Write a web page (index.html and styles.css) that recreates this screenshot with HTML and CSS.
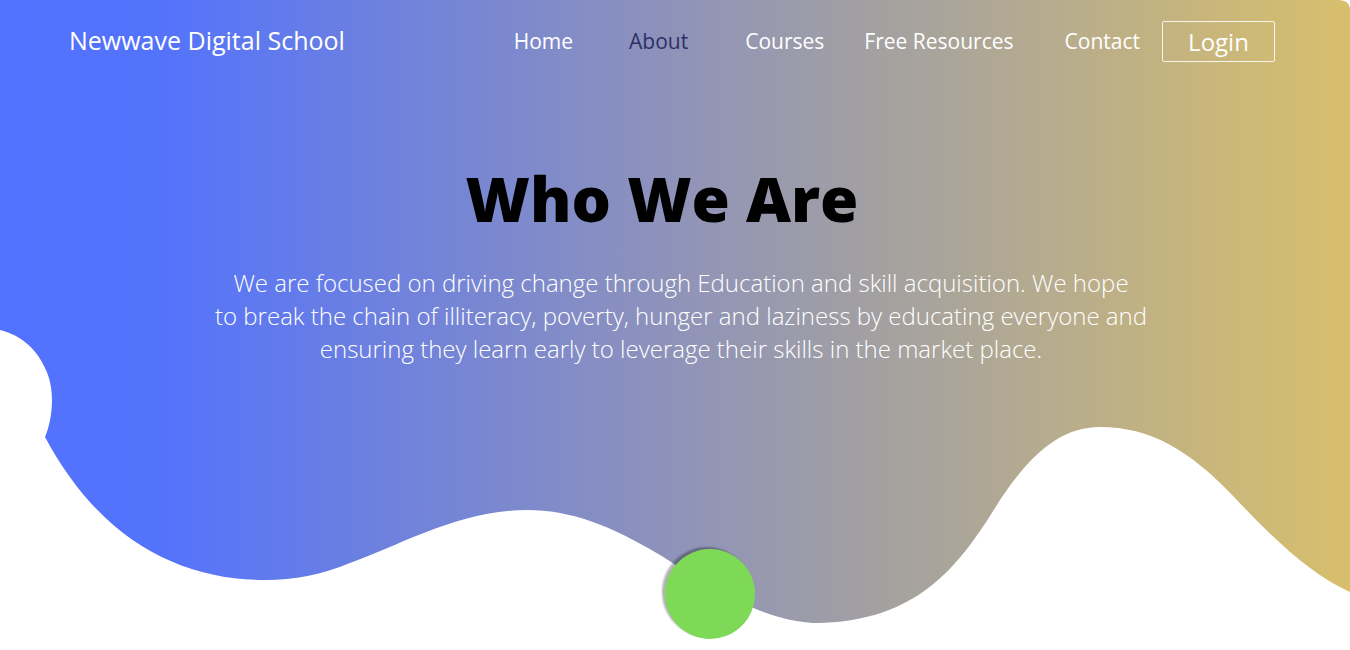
FILE: index.html
```html
<!DOCTYPE html>
<html lang="en">
<head>
<meta charset="utf-8">
<title>Newwave Digital School</title>
<link rel="stylesheet" href="styles.css">
</head>
<body>
<div class="hero">
  <svg class="blob" viewBox="0 0 1350 650" preserveAspectRatio="none" aria-hidden="true">
    <defs>
      <linearGradient id="g" x1="0" y1="0" x2="1350" y2="0" gradientUnits="userSpaceOnUse">
        <stop offset="0" stop-color="#5271ff"/>
        <stop offset="0.12" stop-color="#5473fb"/>
        <stop offset="0.5" stop-color="#8f93b9"/>
        <stop offset="0.68" stop-color="#a7a39d"/>
        <stop offset="1" stop-color="#d8bf6c"/>
      </linearGradient>
    </defs>
    <path fill="url(#g)" d="M0,0 H1338 Q1350,0 1350,10 V592
      C1310,575 1270,535 1235,498
      C1190,450 1150,427 1100,427
      C1060,427 1030,455 1000,500
      C960,565 920,620 820,623
      C760,623 700,580 660,555
      C610,525 570,510 527,510
      C460,510 400,545 350,563
      C320,575 295,580 265,580
      C180,580 100,540 45,437
      C52,420 55,395 48,375
      C38,348 20,335 0,330 Z"/>
  </svg>

  <nav class="nav">
    <a class="brand" href="#">Newwave Digital School</a>
    <ul class="menu">
      <li class="menu-item"><a class="menu-link" href="#">Home</a></li>
      <li class="menu-item menu-item--about"><a class="menu-link menu-link--active" href="#">About</a></li>
      <li class="menu-item menu-item--courses"><a class="menu-link" href="#">Courses</a></li>
      <li class="menu-item menu-item--free"><a class="menu-link" href="#">Free Resources</a></li>
      <li class="menu-item menu-item--contact"><a class="menu-link" href="#">Contact</a></li>
      <li class="menu-item menu-item--login"><a class="login" href="#">Login</a></li>
    </ul>
  </nav>

  <section class="intro">
    <h1 class="title">Who We Are</h1>
    <p class="lead">We are focused on driving change through Education and skill acquisition. We hope<br>to break the chain of illiteracy, poverty, hunger and laziness by educating everyone and ensuring they learn early to leverage their skills in the market place.</p>
  </section>

  <div class="dot"></div>
</div>
</body>
</html>
```
FILE: styles.css
```css
* { box-sizing: border-box; }
html, body { margin: 0; padding: 0; }
body {
  font-family: "Open Sans", "Noto Sans", sans-serif;
  background: #ffffff;
  overflow: hidden;
}
.hero {
  position: relative;
  width: 1350px;
  height: 650px;
  overflow: hidden;
}
.blob {
  position: absolute;
  left: 0;
  top: 0;
  width: 1350px;
  height: 650px;
  z-index: 0;
}
.nav {
  position: relative;
  z-index: 1;
  display: flex;
  align-items: center;
  height: 82px;
  padding: 0 75px 0 69px;
}
.brand {
  color: #ffffff;
  text-decoration: none;
  font-size: 25px;
  font-weight: 400;
  margin-top: -3px;
}
.menu {
  display: flex;
  align-items: center;
  list-style: none;
  margin: 0 0 0 auto;
  padding: 0;
}
.menu-link {
  color: #ffffff;
  text-decoration: none;
  font-size: 21px;
  font-weight: 400;
}
.menu-link--active { color: #2f2f66; }
.menu-item--about { margin-left: 56px; }
.menu-item--courses { margin-left: 57px; }
.menu-item--free { margin-left: 40px; }
.menu-item--contact { margin-left: 51px; }
.menu-item--login { margin-left: 22px; }
.login {
  display: flex;
  align-items: center;
  justify-content: center;
  width: 113px;
  height: 41px;
  border: 1px solid rgba(255,255,255,0.85);
  border-radius: 2px;
  color: #ffffff;
  text-decoration: none;
  font-size: 24px;
}
.intro {
  position: relative;
  z-index: 1;
  text-align: center;
}
.title {
  margin: 76px 0 0 0;
  padding-right: 26px;
  font-size: 62px;
  font-weight: 800;
  line-height: 80px;
  color: #000000;
}
.lead {
  width: 960px;
  margin: 28px auto 0;
  padding-left: 12px;
  font-size: 24px;
  font-weight: 300;
  line-height: 33px;
  color: #ffffff;
}
.dot {
  position: absolute;
  z-index: 1;
  left: 665px;
  top: 549px;
  width: 90px;
  height: 90px;
  border-radius: 50%;
  background: #7ed957;
  box-shadow: -3px -2px 2px rgba(0,0,0,0.3);
}
```
